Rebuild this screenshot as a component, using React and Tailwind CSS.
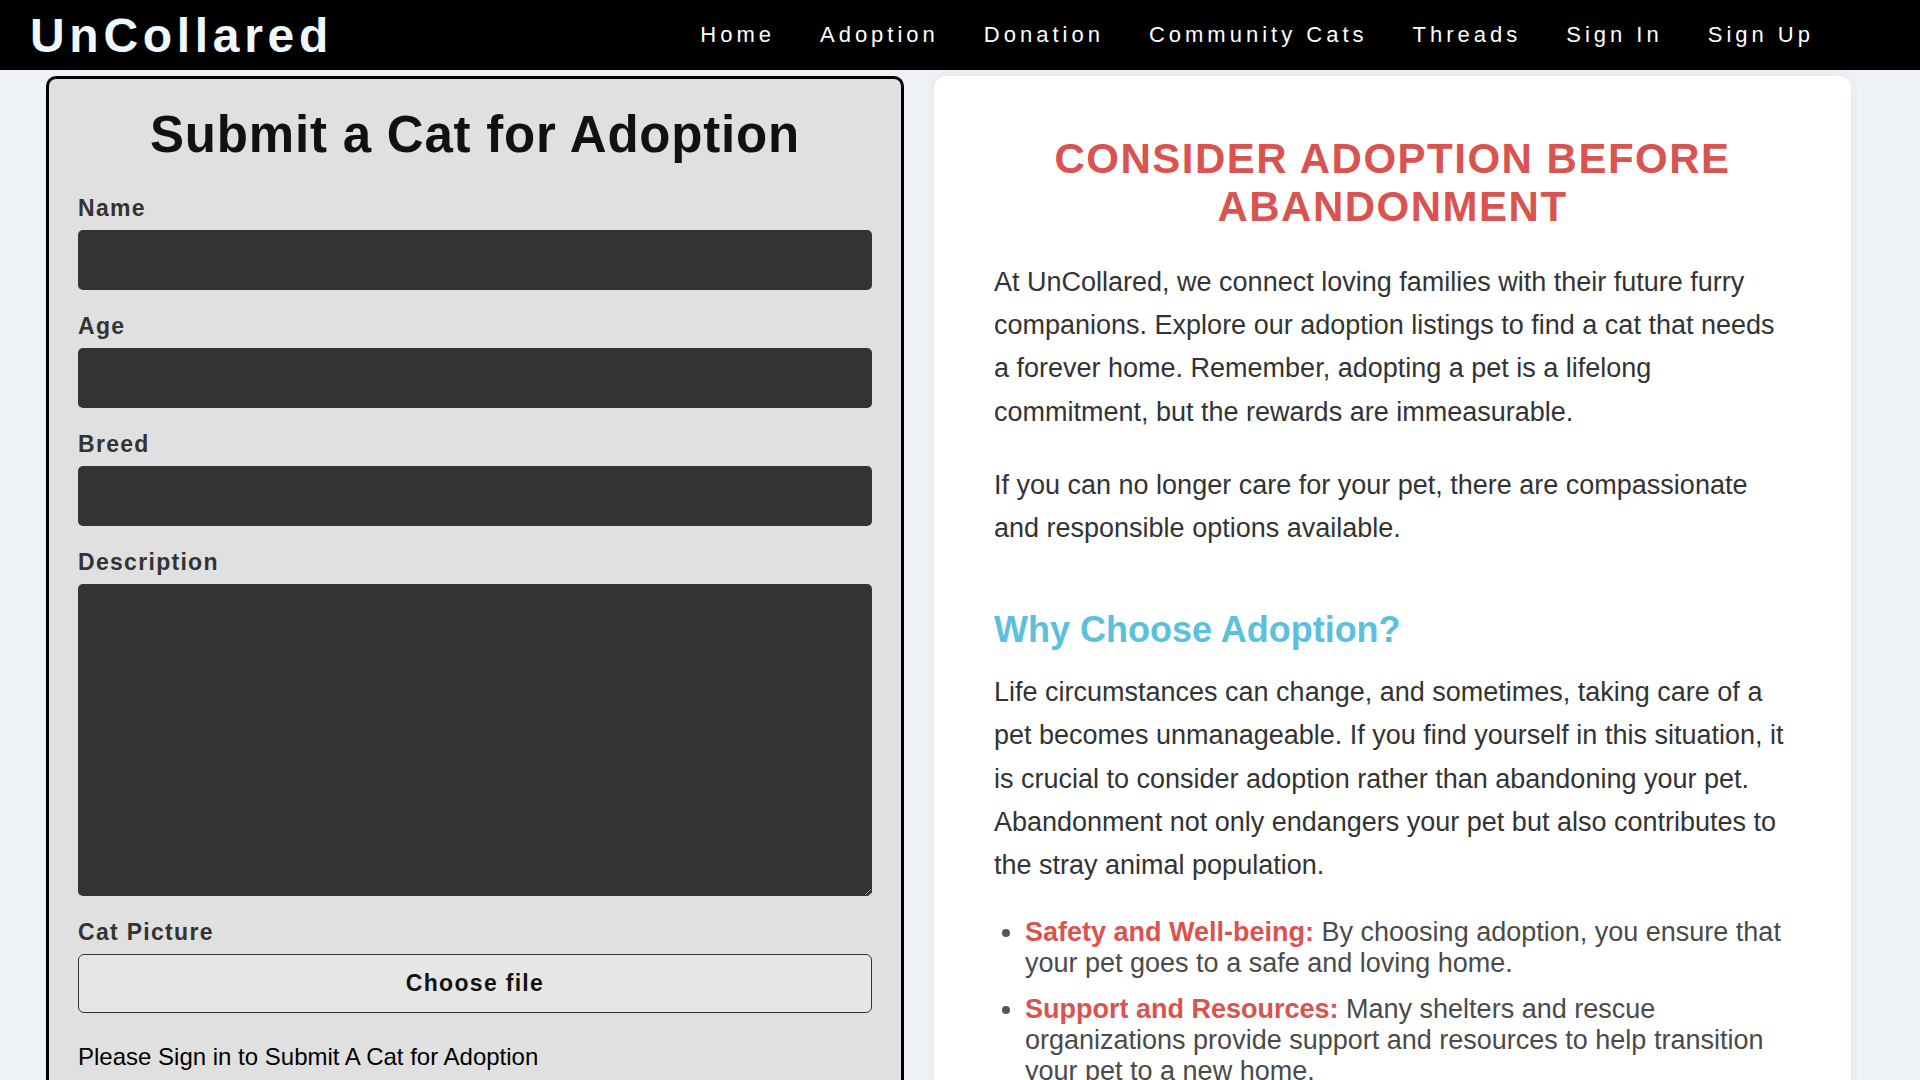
const navLinks = [
  "Home",
  "Adoption",
  "Donation",
  "Community Cats",
  "Threads",
  "Sign In",
  "Sign Up",
];

const textFields = ["Name", "Age", "Breed"];

const Label = ({ children }) => (
  <label className="block mb-[8px] text-[23px] font-bold tracking-[1.3px] text-[#333]">
    {children}
  </label>
);

const AdoptionForm = () => (
  <section className="w-[858px] shrink-0 rounded-[10px] border-[3px] border-black bg-[#e0e0e0] px-[29px] pt-[26px] pb-[40px]">
    <h1 className="mb-[31px] text-center text-[51px] font-bold tracking-[0.8px] text-[#111]">
      Submit a Cat for Adoption
    </h1>
    <form onSubmit={(e) => e.preventDefault()}>
      {textFields.map((field) => (
        <div key={field} className="mb-[23px]">
          <Label>{field}</Label>
          <input
            type="text"
            className="block h-[60px] w-full rounded-[5px] bg-[#333] px-4 text-[20px] text-white outline-none"
          />
        </div>
      ))}

      <div className="mb-[23px]">
        <Label>Description</Label>
        <textarea className="block h-[312px] w-full rounded-[5px] bg-[#333] p-4 text-[20px] text-white outline-none" />
      </div>

      <div>
        <Label>Cat Picture</Label>
        <button
          type="button"
          className="block h-[59px] w-full rounded-[6px] border border-[#333] bg-[#e6e6e6] text-[23px] font-bold tracking-[1.3px] text-[#111]"
        >
          Choose file
        </button>
      </div>

      <p className="mt-[30px] text-[24px] text-black">
        Please Sign in to Submit A Cat for Adoption
      </p>
    </form>
  </section>
);

const AdoptionInfo = () => (
  <section className="w-[917px] shrink-0 rounded-[12px] bg-white px-[60px] pt-[59px] pb-[60px] shadow-[0_0_12px_rgba(0,0,0,0.06)]">
    <h2 className="mb-[30px] text-center text-[42px] font-bold uppercase tracking-[1.5px] text-[#d9534f]">
      Consider Adoption Before Abandonment
    </h2>
    <p className="mb-[30px] text-[27px] leading-[1.6] text-[#333]">
      At UnCollared, we connect loving families with their future furry
      companions. Explore our adoption listings to find a cat that needs a
      forever home. Remember, adopting a pet is a lifelong commitment, but the
      rewards are immeasurable.
    </p>
    <p className="text-[27px] leading-[1.6] text-[#333]">
      If you can no longer care for your pet, there are compassionate and
      responsible options available.
    </p>

    <h3 className="mt-[59px] mb-[20px] text-[36px] font-bold text-[#5bc0de]">
      Why Choose Adoption?
    </h3>
    <p className="mb-[30px] text-[27px] leading-[1.6] text-[#333]">
      Life circumstances can change, and sometimes, taking care of a pet
      becomes unmanageable. If you find yourself in this situation, it is
      crucial to consider adoption rather than abandoning your pet. Abandonment
      not only endangers your pet but also contributes to the stray animal
      population.
    </p>
    <ul className="list-disc pl-[31px] text-[27px] text-[#4a4a4a] marker:text-[#555]">
      <li className="mb-[15px]">
        <strong className="font-bold text-[#d9534f]">
          Safety and Well-being:
        </strong>{" "}
        By choosing adoption, you ensure that your pet goes to a safe and
        loving home.
      </li>
      <li className="mb-[15px]">
        <strong className="font-bold text-[#d9534f]">
          Support and Resources:
        </strong>{" "}
        Many shelters and rescue organizations provide support and resources
        to help transition your pet to a new home.
      </li>
    </ul>
  </section>
);

export default function App() {
  return (
    <div className="min-h-screen bg-[#eef2f7] font-['Liberation_Sans',Arial,sans-serif] leading-[normal]">
      {/* Navbar */}
      <nav className="flex h-[70px] items-center bg-black pl-[30px] pr-[106px]">
        <a href="#" className="text-[48px] font-bold tracking-[4.7px] text-[#f0f8ff]">
          UnCollared
        </a>
        <ul className="ml-auto flex gap-[45px]">
          {navLinks.map((link) => (
            <li key={link}>
              <a href="#" className="text-[22px] tracking-[4px] text-white">
                {link}
              </a>
            </li>
          ))}
        </ul>
      </nav>

      <main className="flex items-start gap-[30px] pl-[46px] pt-[6px] pb-10">
        <AdoptionForm />
        <AdoptionInfo />
      </main>
    </div>
  );
}
